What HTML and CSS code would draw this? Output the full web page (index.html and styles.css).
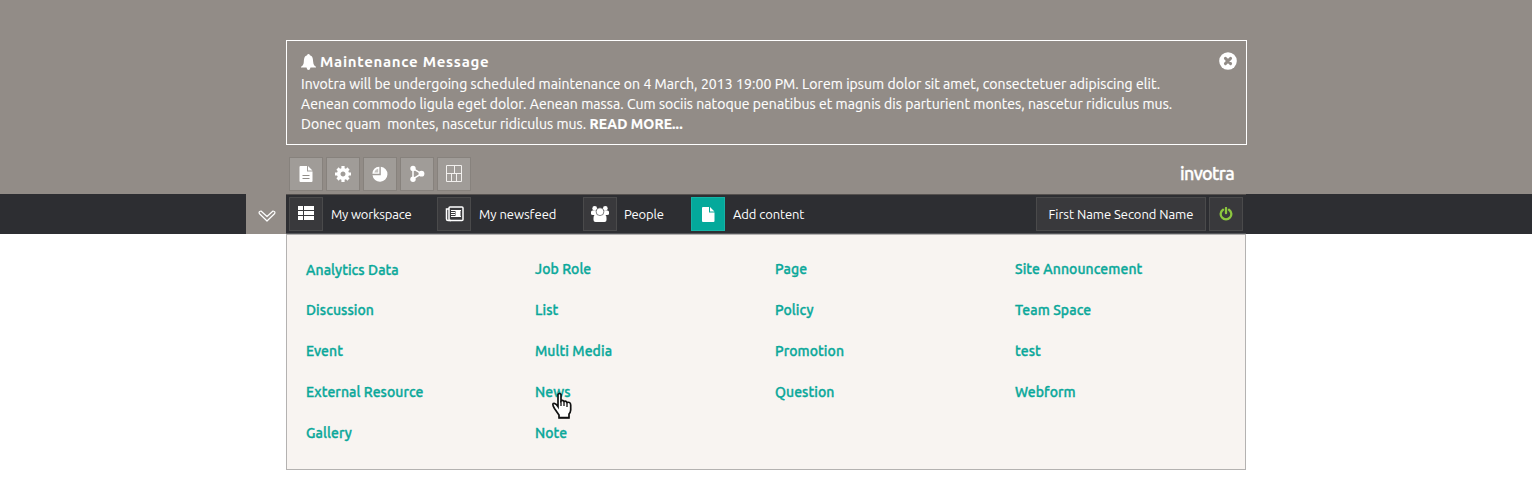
FILE: index.html
```html
<!DOCTYPE html>
<html lang="en">
<head>
<meta charset="utf-8">
<title>Invotra</title>
<link rel="stylesheet" href="styles.css">
</head>
<body>
<header class="top">
  <section class="notice">
    <div class="notice-body">
      <h1 class="notice-title"><svg width="15" height="16" viewBox="0 0 15 16"><path fill="#fff" d="M7.500 0Q8.600 0 8.900 1.300C12 2.200 12 5.500 12.200 8C12.400 10.500 13.300 11.600 15 12.800V13.500H9.500Q9 16 7.500 16Q6 16 5.500 13.500H0V12.800C1.700 11.600 2.600 10.500 2.800 8C3 5.500 3 2.200 6.100 1.300Q6.400 0 7.500 0Z"/></svg><span>Maintenance Message</span></h1>
      <p class="line">Invotra will be undergoing scheduled maintenance on 4 March, 2013 19:00 PM. Lorem ipsum dolor sit amet, consectetuer adipiscing elit.</p>
      <p class="line">Aenean commodo ligula eget dolor. Aenean massa. Cum sociis natoque penatibus et magnis dis parturient montes, nascetur ridiculus mus.</p>
      <p class="line">Donec quam&nbsp; montes, nascetur ridiculus mus. <b>READ MORE...</b></p>
    </div>
    <svg class="close" width="18" height="18" viewBox="0 0 18 18"><circle cx="9" cy="9" r="8.800" fill="#fff"/><path d="M6.400 6.400l5.200 5.200M11.600 6.400l-5.200 5.200" stroke="#928c87" stroke-width="2.900" stroke-linecap="round"/></svg>
  </section>
  <div class="tools">
    <a class="tool"><svg width="14" height="16" viewBox="0 0 14 16"><path fill="#fff" d="M1 0H8V5.500H13.500V15Q13.500 16 12.500 16H1.500Q.5 16 .5 15V1Q.5 0 1.500 0ZM9 0L13.500 4.500H9Z"/><path d="M3.500 9.500H10.500M3.500 12.500H10.500" stroke="#928e89" stroke-width="1"/></svg></a>
    <a class="tool"><svg width="16" height="16" viewBox="-8 -8 16 16"><circle r="4.300" fill="none" stroke="#fff" stroke-width="3.600"/><path stroke="#fff" stroke-width="3.200" d="M0-8V-5M0 8V5M-8 0H-5M8 0H5M-5.500-5.500L-3.700-3.700M5.500 5.500L3.700 3.700M-5.500 5.500L-3.700 3.700M5.500-5.500L3.700-3.700"/></svg></a>
    <a class="tool"><svg width="16" height="16" viewBox="0 0 16 16"><path fill="#fff" d="M8.800.8A7.500 7.500 0 1 1 .5 9.200H8.800ZM7.400.8V7.700H.4Q.8 1.300 7.400.8Z"/><path fill="#a09c98" d="M6.200 2.500V6.500H2.200Q3 3.300 6.200 2.500Z" opacity=".6"/></svg></a>
    <a class="tool"><svg width="16" height="18" viewBox="0 0 16 18"><path d="M4 3.500L4 14L12.500 8.700Z" fill="none" stroke="#fff" stroke-width="1.500"/><g fill="#fff"><circle cx="4" cy="3.500" r="2.700"/><circle cx="4" cy="14.300" r="2.700"/><circle cx="12.500" cy="8.700" r="2.900"/></g></svg></a>
    <a class="tool"><svg width="18" height="18" viewBox="0 0 18 18" fill="none" stroke="#f1efed"><path d="M1.500 .5H16.500V16.500H1.500ZM6.500 8.500V16.500M11.500 8.500V16.500M9.500 .5V8.500M1.500 8.500H16.500"/></svg></a>
    <span class="brand">invotra</span>
  </div>
</header>
<nav class="bar">
  <a class="toggle"><svg width="18" height="12" viewBox="0 0 18 12"><path d="M3 1L9 6.500L15 1Q17.600 1.500 16.700 3.500L9 11L1.300 3.500Q.4 1.500 3 1Z" fill="none" stroke="#fff" stroke-width="1.200" stroke-linejoin="round"/></svg></a>
  <div class="links">
    <a class="link workspace"><span class="box"><svg width="16" height="14" viewBox="0 0 16 14"><path fill="#fff" d="M0 0H5V4H0ZM6 0H16V4H6ZM0 5H5V9H0ZM6 5H16V9H6ZM0 10H5V14H0ZM6 10H16V14H6Z"/></svg></span><span class="label">My workspace</span></a>
    <a class="link newsfeed"><span class="box"><svg width="19" height="16" viewBox="0 0 19 16"><g fill="none" stroke="#fff" stroke-width="1.500"><rect x="4" y="1" width="14" height="13.500" rx="1"/><path d="M4 3H1.500V13Q1.500 14.500 3 14.500H6"/><rect x="10.500" y="5" width="5" height="5" fill="#fff" stroke="none"/><path stroke-width="1" d="M6 4.500H16M6 6.500H10M6 8.500H10M6 10.500H16"/></g></svg></span><span class="label">My newsfeed</span></a>
    <a class="link people"><span class="box"><svg width="18" height="16" viewBox="0 0 18 16"><g fill="#fff"><circle cx="3.700" cy="2.400" r="2.400"/><circle cx="14.300" cy="2.400" r="2.400"/><path d="M0 8V6Q0 4.500 1.500 4.500H5L6 9H2Q0 9 0 8ZM18 8V6Q18 4.500 16.500 4.500H13L12 9H16Q18 9 18 8Z"/><path d="M2.500 14V12Q2.500 8.500 5 8.500H13Q15.500 8.500 15.500 12V14Q15.500 16 13.500 16H4.500Q2.500 16 2.500 14Z"/><circle cx="9" cy="5.700" r="3.900" stroke="#39393c" stroke-width=".6"/></g></svg></span><span class="label">People</span></a>
    <a class="link add"><span class="box active"><svg width="13" height="15" viewBox="0 0 13 15"><path fill="#fff" d="M1 0H7V5.500H12.500V14Q12.500 15 11.500 15H1Q0 15 0 14V1Q0 0 1 0ZM8 0L12.500 4.500H8Z"/></svg></span><span class="label">Add content</span></a>
    <a class="user">First Name Second Name</a>
    <a class="box power"><svg width="14" height="14" viewBox="0 0 14 14" fill="none" stroke="#8cc63f" stroke-width="2.300" stroke-linecap="round"><path d="M4 2.700A5.300 5.300 0 1 0 10 2.700M7 1V6.200"/></svg></a>
  </div>
</nav>
<main class="menu">
  <ul class="col first"><li>Analytics Data</li><li>Discussion</li><li>Event</li><li>External Resource</li><li>Gallery</li></ul>
  <ul class="col"><li>Job Role</li><li>List</li><li>Multi Media</li><li class="hover">News
    <svg class="pointer" width="21" height="28" viewBox="0 0 21 28"><path d="M6 2.500Q7.500 .2 9 2.500V9Q10.500 7.500 12 9.500Q14 8.500 15 10.500Q18.500 9.500 18.700 13V18Q18.500 20.500 17 22V26H7V23L2.500 16.500Q0 12.500 1.300 11.500Q3.500 10.500 6 14.500Z" fill="#fff" stroke="#111" stroke-width="1.700"/><path d="M9 9V14M12 9.500V14M15 10.500V15M7 25.500H17" stroke="#111" stroke-width="1.300"/></svg></li><li>Note</li></ul>
  <ul class="col"><li>Page</li><li>Policy</li><li>Promotion</li><li>Question</li></ul>
  <ul class="col"><li>Site Announcement</li><li>Team Space</li><li>test</li><li>Webform</li></ul>
</main>
</body>
</html>
```
FILE: styles.css
```css
* { box-sizing: border-box; }
body { margin: 0; height: 485px; overflow: hidden; background: #fff; color: #fff; font-family: Ubuntu, "Noto Sans", sans-serif; font-size: 13px; }
svg { display: block; flex: none; }
.top { height: 194px; padding: 40px 285px 0 286px; background: #928c87; }
.notice { display: flex; justify-content: space-between; height: 105px; padding: 11px 9px 0 14px; border: 1px solid #fff; }
.notice-title { display: flex; align-items: center; gap: 4px; height: 19px; margin: 0 0 3px; font-size: 15px; line-height: 19px; font-weight: 700; letter-spacing: .7px; }
.line { margin: 0; height: 20px; line-height: 20px; font-size: 14px; letter-spacing: .067px; white-space: nowrap; -webkit-text-stroke: .15px #fff; }
.tools { display: flex; gap: 3px; height: 49px; padding: 12px 13px 0 3px; }
.tool, .box { display: flex; align-items: center; justify-content: center; flex: none; width: 34px; height: 34px; }
.tool { border: 1px solid #87827d; background: #a09c98; }
.brand { margin-left: auto; margin-top: -1px; font: 500 18px/34px Ubuntu, "Noto Sans", sans-serif; letter-spacing: -.65px; -webkit-text-stroke: .35px #fff; }
.bar { display: flex; height: 40px; padding: 0 286px 0 246px; background: #2d2e32; }
.toggle { display: flex; align-items: center; justify-content: center; width: 40px; padding: 3px 0 0 2px; background: #928c87; }
.links { display: flex; flex: 1; align-items: flex-start; padding: 2px 3px 0; border-top: 1px solid #55514f; border-bottom: 1px solid #55565a; }
.box { border: 1px solid #4a4a4b; background: #39393c; }
.box.active { border-color: #16b3a6; background: #04a99b; }
.link { display: flex; align-items: center; gap: 8px; white-space: nowrap; letter-spacing: -.1px; }
.workspace { width: 148px; letter-spacing: -.2px; }
.workspace .box { padding-bottom: 2px; }
.newsfeed { width: 146px; letter-spacing: -.04px; }
.people { width: 108px; gap: 7px; }
.user { display: flex; align-items: center; justify-content: center; width: 170px; height: 34px; margin: 0 3px 0 auto; border: 1px solid #4a4a4b; background: #39393c; white-space: nowrap; letter-spacing: -.05px; }
.menu { display: flex; width: 960px; height: 236px; margin-left: 286px; padding: 14px 0 0 19px; border: 1px solid #b4b2b1; background: #f8f4f1; color: #0aa89a; font-size: 14px; font-weight: 500; letter-spacing: .07px; -webkit-text-stroke: .35px #0aa89a; }
.col { flex: none; width: 240px; margin: 0; padding: 0; list-style: none; }
.col.first { width: 229px; }
.col:last-child { width: 200px; }
.col li { height: 41px; line-height: 41px; }
.first li:first-child { padding-top: 1px; }
.hover { position: relative; }
.pointer { position: absolute; left: 17px; top: 20px; }
```
